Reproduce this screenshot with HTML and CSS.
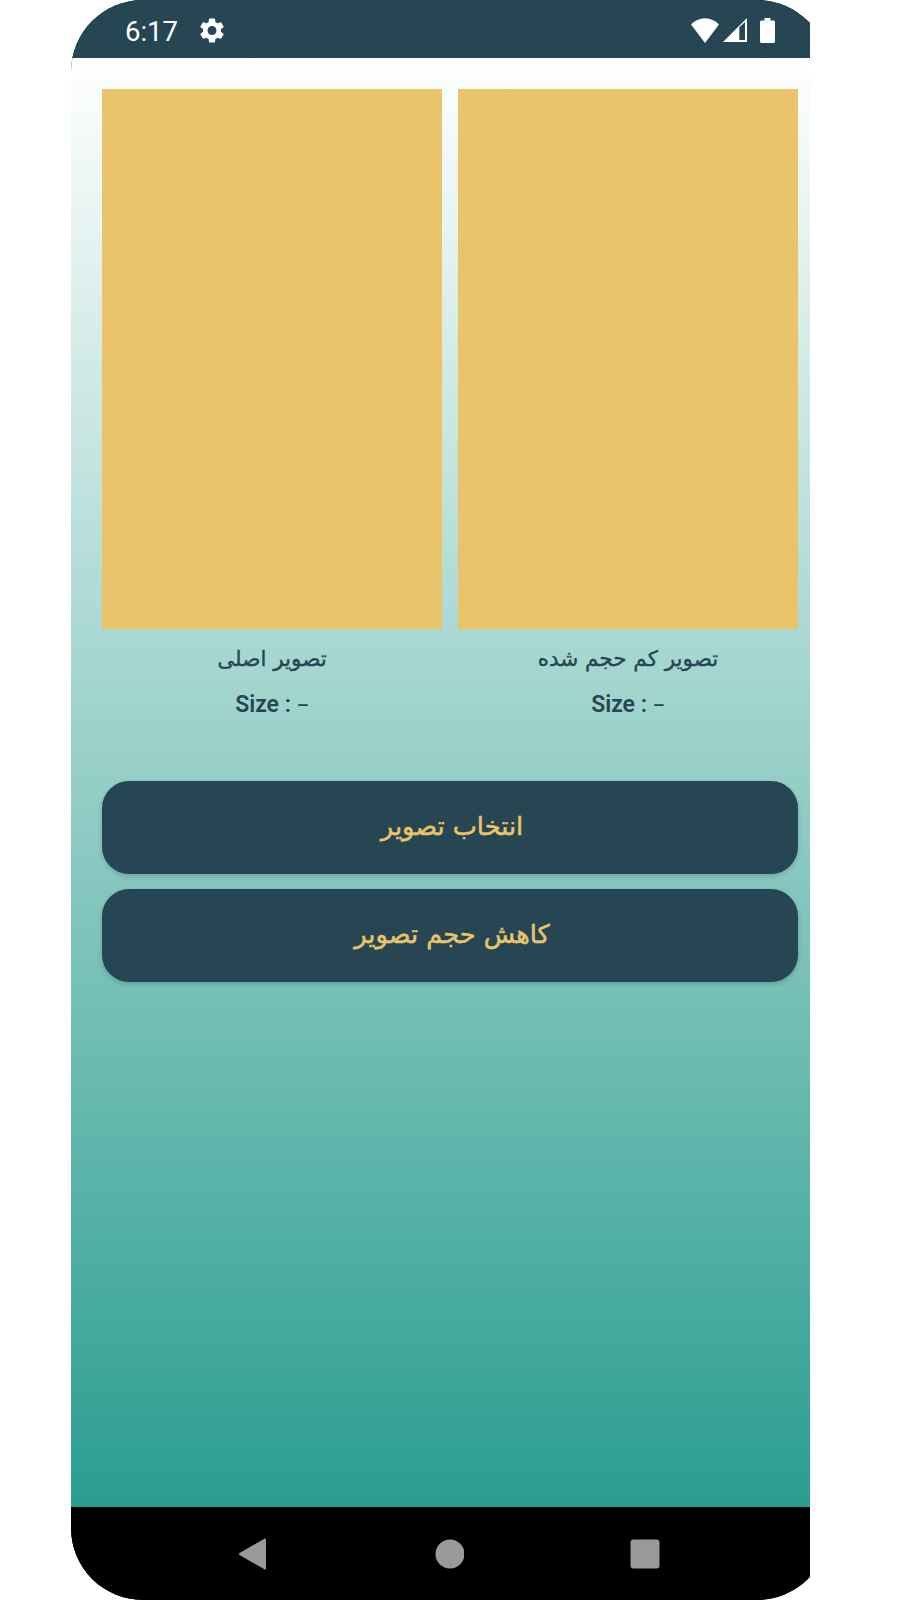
FILE: index.html
```html
<!DOCTYPE html>
<html lang="fa">
<head>
<meta charset="utf-8">
<title>کاهش حجم تصویر</title>
<link rel="stylesheet" href="styles.css">
</head>
<body>
<div class="viewport">
  <div class="phone">
    <header class="status">
      <span class="time">6:17</span>
      <svg class="gear" viewBox="2.4 2 19.2 20" aria-hidden="true"><path d="M19.14 12.94c.04-.3.06-.61.06-.94 0-.32-.02-.64-.07-.94l2.03-1.58c.18-.14.23-.41.12-.61l-1.92-3.32c-.12-.22-.37-.29-.59-.22l-2.39.96c-.5-.38-1.03-.7-1.62-.94l-.36-2.54c-.04-.24-.24-.41-.48-.41h-3.84c-.24 0-.43.17-.47.41l-.36 2.54c-.59.24-1.13.57-1.62.94l-2.39-.96c-.22-.08-.47 0-.59.22L2.74 8.87c-.12.21-.08.47.12.61l2.03 1.58c-.05.3-.09.63-.09.94s.02.64.07.94l-2.03 1.58c-.18.14-.23.41-.12.61l1.92 3.32c.12.22.37.29.59.22l2.39-.96c.5.38 1.03.7 1.62.94l.36 2.54c.05.24.24.41.48.41h3.84c.24 0 .44-.17.47-.41l.36-2.54c.59-.24 1.13-.56 1.62-.94l2.39.96c.22.08.47 0 .59-.22l1.92-3.32c.12-.22.07-.47-.12-.61l-2.01-1.58zM12 15.6c-1.98 0-3.6-1.62-3.6-3.6s1.62-3.6 3.6-3.6 3.6 1.62 3.6 3.6-1.62 3.6-3.6 3.6z"/></svg>
      <div class="status-right">
        <svg class="wifi" viewBox="0 0 28 25" aria-hidden="true"><path d="M0 6.500C3.800 2.600 8.600.3 14 .3s10.200 2.300 14 6.200L14 25z"/></svg>
        <svg class="signal" viewBox="0 0 24 24" aria-hidden="true"><path fill-rule="evenodd" d="M0 24 24 0v24zM16.300 9.200v12.900h5.700V3.900z"/></svg>
        <svg class="battery" viewBox="0 0 15 25" aria-hidden="true"><path d="M4.500 0h6v2.500h3c.8 0 1.500.7 1.500 1.500v19.500c0 .8-.7 1.500-1.500 1.500h-12C.7 25 0 24.300 0 23.500V4c0-.8.7-1.500 1.500-1.500h3z"/></svg>
      </div>
    </header>

    <main class="content">
      <section class="previews">
        <figure class="preview">
          <div class="image"></div>
          <figcaption class="caption" dir="rtl">تصویر اصلی</figcaption>
          <p class="size">Size : <span class="dash">–</span></p>
        </figure>
        <figure class="preview">
          <div class="image"></div>
          <figcaption class="caption" dir="rtl">تصویر کم حجم شده</figcaption>
          <p class="size">Size : <span class="dash">–</span></p>
        </figure>
      </section>
      <div class="actions">
        <button class="action" dir="rtl">انتخاب تصویر</button>
        <button class="action" dir="rtl">کاهش حجم تصویر</button>
      </div>
    </main>

    <nav class="nav">
      <svg class="nav-icon" viewBox="0 0 30 32" aria-hidden="true"><path d="M1.500 15 26.800.6c.6-.3 1.200 0 1.200.7v29.400c0 .7-.6 1-1.200.7L1.500 17c-.7-.5-.7-1.500 0-2z"/></svg>
      <svg class="nav-icon" viewBox="0 0 30 32" aria-hidden="true"><circle cx="16" cy="16" r="14.500"/></svg>
      <svg class="nav-icon" viewBox="0 0 30 32" aria-hidden="true"><rect x=".5" y="1.500" width="29" height="29" rx="3"/></svg>
    </nav>
  </div>
</div>
</body>
</html>
```

FILE: styles.css
```css
* { box-sizing: border-box; }

html, body {
  margin: 0;
  background: #fff;
}

body {
  width: 900px;
  height: 1600px;
  overflow: hidden;
  font-family: Roboto, "DejaVu Sans", sans-serif;
}

.viewport {
  width: 739px;
  height: 1600px;
  margin-left: 71px;
  overflow: hidden;
}

.phone {
  width: 758px;
  height: 1600px;
  border-radius: 72px;
  overflow: hidden;
  display: flex;
  flex-direction: column;
  background: #000;
}

.status {
  flex: 0 0 58px;
  display: flex;
  align-items: center;
  padding: 2px 54px 0;
  background: #264653;
  color: #fff;
  fill: #fff;
}

.time {
  padding-top: 3px;
  font-size: 27.5px;
  line-height: 30px;
}

.gear {
  width: 24px;
  height: 25px;
  margin-left: 22px;
}

.status-right {
  margin-left: auto;
  display: flex;
  align-items: center;
}

.wifi { width: 28px; height: 25px; }
.signal { width: 24px; height: 24px; margin-left: 4px; }
.battery { width: 15px; height: 25px; margin-left: 13px; }

.content {
  flex: 1;
  padding: 31px 31px 0;
  background: linear-gradient(180deg, #fff 0%, #2a9d8f 100%);
}

.previews {
  display: grid;
  grid-template-columns: 1fr 1fr;
  gap: 16px;
}

.preview {
  margin: 0;
  text-align: center;
  color: #264653;
}

.image {
  height: 540px;
  background: #e9c46a;
}

.caption {
  margin-top: 14.5px;
  font-family: "DejaVu Sans", sans-serif;
  font-size: 21.5px;
  line-height: 30px;
  -webkit-text-stroke: .35px #264653;
}

.size {
  margin: 15.5px 0 0;
  font-size: 23px;
  font-weight: 600;
  line-height: 32px;
}

.dash {
  font-size: 19px;
  font-weight: 500;
  line-height: 1;
}

.actions {
  display: flex;
  flex-direction: column;
  gap: 15px;
  margin-top: 60px;
}

.action {
  height: 93px;
  padding: 0 0 4px 4px;
  border: 0;
  border-radius: 27px;
  background: #264653;
  color: #e9c46a;
  font-family: "DejaVu Sans", sans-serif;
  font-size: 25.6px;
  -webkit-text-stroke: .5px #e9c46a;
  box-shadow: 0 2px 5px rgba(0, 0, 0, .18);
}

.nav {
  flex: 0 0 93px;
  display: flex;
  align-items: center;
  gap: 166px;
  padding: 0 0 0 167px;
  background: #000;
  fill: #999;
}

.nav-icon {
  width: 30px;
  height: 32px;
}
```
